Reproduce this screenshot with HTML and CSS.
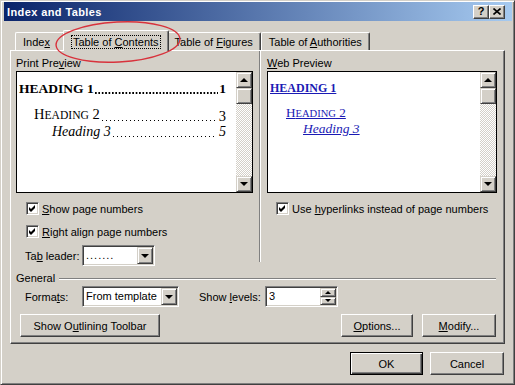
FILE: index.html
```html
<!DOCTYPE html>
<html lang="en">
<head>
    <meta charset="UTF-8">
    <title>Index and Tables</title>
    <link rel="stylesheet" href="styles.css">
</head>
<body>
    <div class="window">
        <div class="titlebar">
            <span class="title">Index and Tables</span>
            <div class="title-buttons">
                <span class="tbtn">?</span>
                <span class="tbtn">
                    <svg width="8" height="7" viewBox="0 0 8 7"><path d="M0.5 0.5 L7.5 6.5 M7.5 0.5 L0.5 6.5" stroke="#000" stroke-width="1.6"/></svg>
                </span>
            </div>
        </div>

        <div class="content">
            <div class="tabs">
                <div class="tab tab-index">Inde<u>x</u></div>
                <div class="tab active"><span class="focus">Table of <u>C</u>ontents</span></div>
                <div class="tab">Table of <u>F</u>igures</div>
                <div class="tab">Table of <u>A</u>uthorities</div>
            </div>

            <div class="panel">
                <div class="columns">
                    <div class="col col-print">
                        <div class="group-label">Print Pre<u>v</u>iew</div>
                        <div class="preview">
                            <div class="preview-body print">
                                <div class="toc h1"><span>HEADING 1</span><span class="leader"></span><span class="num">1</span></div>
                                <div class="toc h2"><span>H<span class="sc">EADING</span> 2</span><span class="leader"></span><span class="num">3</span></div>
                                <div class="toc h3"><span>Heading 3</span><span class="leader"></span><span class="num">5</span></div>
                            </div>
                            <div class="scrollbar">
                                <div class="sb-btn"><span class="arrow-up"></span></div>
                                <div class="sb-btn"></div>
                                <div class="sb-track"></div>
                                <div class="sb-btn"><span class="arrow-down"></span></div>
                            </div>
                        </div>
                        <div class="check-row first">
                            <span class="checkbox"><svg width="7" height="7" viewBox="0 0 7 7"><polygon points="0,2 2,4 6,0 6,3 2,7 0,5" fill="#000"/></svg></span>
                            <span><u>S</u>how page numbers</span>
                        </div>
                        <div class="check-row">
                            <span class="checkbox"><svg width="7" height="7" viewBox="0 0 7 7"><polygon points="0,2 2,4 6,0 6,3 2,7 0,5" fill="#000"/></svg></span>
                            <span><u>R</u>ight align page numbers</span>
                        </div>
                        <div class="field-row leader-row">
                            <span class="field-label">Ta<u>b</u> leader:</span>
                            <div class="select select-leader">
                                <span class="select-text dots">.......</span>
                                <span class="drop-btn"><span class="arrow-down"></span></span>
                            </div>
                        </div>
                    </div>

                    <div class="col col-web">
                        <div class="group-label"><u>W</u>eb Preview</div>
                        <div class="preview preview-web">
                            <div class="preview-body web">
                                <div class="link h1">HEADING 1</div>
                                <div class="link h2">H<span class="sc">EADING</span> 2</div>
                                <div class="link h3">Heading 3</div>
                            </div>
                            <div class="scrollbar">
                                <div class="sb-btn"><span class="arrow-up"></span></div>
                                <div class="sb-btn"></div>
                                <div class="sb-track"></div>
                                <div class="sb-btn"><span class="arrow-down"></span></div>
                            </div>
                        </div>
                        <div class="check-row first">
                            <span class="checkbox"><svg width="7" height="7" viewBox="0 0 7 7"><polygon points="0,2 2,4 6,0 6,3 2,7 0,5" fill="#000"/></svg></span>
                            <span>Use <u>h</u>yperlinks instead of page numbers</span>
                        </div>
                    </div>
                </div>

                <div class="general">
                    <span>General</span>
                    <span class="etched"></span>
                </div>

                <div class="field-row formats-row">
                    <span class="field-label">Forma<u>t</u>s:</span>
                    <div class="select select-formats">
                        <span class="select-text">From template</span>
                        <span class="drop-btn"><span class="arrow-down"></span></span>
                    </div>
                    <span class="field-label levels-label">Show <u>l</u>evels:</span>
                    <div class="select spin">
                        <span class="select-text">3</span>
                        <span class="spin-btns">
                            <span class="spin-btn"><span class="arrow-up small"></span></span>
                            <span class="spin-btn"><span class="arrow-down small"></span></span>
                        </span>
                    </div>
                </div>

                <div class="button-row">
                    <button class="btn btn-outline">Show O<u>u</u>tlining Toolbar</button>
                    <span class="spacer"></span>
                    <button class="btn btn-options"><u>O</u>ptions...</button>
                    <button class="btn btn-modify"><u>M</u>odify...</button>
                </div>
            </div>

            <div class="footer">
                <button class="btn btn-default">OK</button>
                <button class="btn btn-cancel">Cancel</button>
            </div>
        </div>

        <svg class="highlight" width="128" height="44" viewBox="0 0 128 44">
            <ellipse cx="64" cy="22" rx="62" ry="20" fill="none" stroke="#d8323c" stroke-width="1.4" transform="rotate(-3 64 22)"/>
        </svg>
    </div>
</body>
</html>
```

FILE: styles.css
```css
* {
    box-sizing: border-box;
}

body {
    margin: 0;
    font-family: "Liberation Sans", Arial, sans-serif;
    font-size: 11px;
    color: #000;
    background: #d4d0c8;
}

.window {
    position: relative;
    width: 515px;
    height: 385px;
    background: #d4d0c8;
    border: 1px solid;
    border-color: #d4d0c8 #404040 #404040 #d4d0c8;
    box-shadow: inset 1px 1px #fff, inset -1px -1px #808080;
    padding: 1px 2px 2px 3px;
}

/* title bar */

.titlebar {
    height: 19px;
    display: flex;
    align-items: center;
    justify-content: space-between;
    background: linear-gradient(to right, #0a246a, #a6caf0);
    padding: 0 7px 0 3px;
}

.title {
    color: #fff;
    font-weight: bold;
    letter-spacing: 0.4px;
}

.title-buttons {
    display: flex;
}

.tbtn {
    width: 16px;
    height: 14px;
    display: flex;
    align-items: center;
    justify-content: center;
    background: #d4d0c8;
    border: 1px solid;
    border-color: #fff #404040 #404040 #fff;
    box-shadow: inset -1px -1px #808080;
    font-weight: bold;
    font-size: 11px;
    line-height: 1;
}

/* tabs */

.content {
    padding: 0 7px 0 6px;
}

.tabs {
    display: flex;
    align-items: flex-end;
    margin-top: 9px;
    padding-left: 5px;
    height: 20px;
}

.tab {
    position: relative;
    border: 1px solid;
    border-bottom: none;
    border-color: #fff #404040 #404040 #fff;
    border-radius: 2px 2px 0 0;
    box-shadow: inset -1px 0 #808080;
    padding: 3px 7px 1px;
    line-height: 13px;
    white-space: nowrap;
    background: #d4d0c8;
}

.tab-index {
    padding-right: 14px;
}

.tab.active {
    z-index: 2;
    margin: 0 -2px -1px;
    padding: 4px 7px 2px;
}

.focus {
    display: block;
    border: 1px dotted #000;
    padding: 0 1px;
    line-height: 12px;
}

/* panel */

.panel {
    border: 1px solid;
    border-color: #fff #404040 #404040 #fff;
    box-shadow: inset -1px -1px #808080;
    padding-bottom: 6px;
}

.columns {
    display: grid;
    grid-template-columns: 248px 1fr;
    align-items: start;
}

.col {
    padding-top: 6px;
}

.col-print {
    padding-left: 5px;
}

.col-web {
    height: 211px;
    border-left: 1px solid #808080;
    box-shadow: inset 1px 0 #fff;
    padding-left: 7px;
}

.group-label {
    line-height: 13px;
}

.preview {
    margin-top: 1px;
    width: 237px;
    height: 122px;
    border: 1px solid #000;
    background: #fff;
    display: flex;
}

.preview-web {
    width: 230px;
}

.preview-body {
    flex: 1;
    min-width: 0;
    font-family: "Liberation Serif", "Times New Roman", serif;
    padding-top: 9px;
}

.print {
    padding-right: 10px;
}

.sc {
    font-size: 80%;
}

.toc {
    display: flex;
    align-items: flex-end;
    white-space: nowrap;
}

.leader {
    flex: 1 1 0;
    min-width: 0;
    height: 1px;
    margin: 0 2px 3px 2px;
    background: linear-gradient(to right, #000 1px, transparent 1px) 0 0 / 4px 1px repeat-x;
}

.num {
    margin-left: 2px;
}

.toc.h1 {
    font-weight: bold;
    font-size: 13.5px;
    line-height: 16px;
    padding-left: 2px;
}

.toc.h1 .leader {
    height: 2px;
    margin: 0 1px 3px 1px;
    background: linear-gradient(to right, #000 2px, transparent 2px) 0 0 / 3.4px 2px repeat-x;
}

.toc.h1 .num {
    margin-left: 0;
}

.toc.h2 {
    font-size: 14.5px;
    line-height: 16px;
    margin-top: 9px;
    padding-left: 17px;
}

.toc.h3 {
    font-style: italic;
    font-size: 14px;
    line-height: 16px;
    padding-left: 35px;
}

.link {
    color: #1a1ab4;
    text-decoration: underline;
    white-space: nowrap;
}

.link.h1 {
    font-weight: bold;
    font-size: 12px;
    line-height: 14px;
    padding-left: 2px;
}

.link.h2 {
    font-size: 13.2px;
    line-height: 15px;
    margin-top: 10px;
    padding-left: 18px;
}

.link.h3 {
    font-style: italic;
    font-size: 13.5px;
    line-height: 15px;
    padding-left: 35px;
}

/* scrollbar */

.scrollbar {
    width: 16px;
    display: flex;
    flex-direction: column;
    background: repeating-conic-gradient(#d4d0c8 0 25%, #fff 0 50%) 0 0 / 2px 2px;
}

.sb-btn {
    height: 16px;
    display: flex;
    align-items: center;
    justify-content: center;
    background: #d4d0c8;
    border: 1px solid;
    border-color: #d4d0c8 #404040 #404040 #d4d0c8;
    box-shadow: inset 1px 1px #fff, inset -1px -1px #808080;
}

.sb-track {
    flex: 1;
}

.arrow-up,
.arrow-down {
    width: 0;
    height: 0;
    border-left: 4px solid transparent;
    border-right: 4px solid transparent;
}

.arrow-up {
    border-bottom: 4px solid #000;
}

.arrow-down {
    border-top: 4px solid #000;
}

.arrow-up.small {
    border-left-width: 3px;
    border-right-width: 3px;
    border-bottom-width: 3px;
}

.arrow-down.small {
    border-left-width: 3px;
    border-right-width: 3px;
    border-top-width: 3px;
}

/* checkboxes */

.check-row {
    display: flex;
    align-items: center;
    gap: 3px;
    height: 13px;
    margin-top: 10px;
    padding-left: 10px;
    white-space: nowrap;
}

.check-row.first {
    margin-top: 9px;
}

.col-web .check-row {
    padding-left: 9px;
}

.checkbox {
    width: 13px;
    height: 13px;
    flex: none;
    display: flex;
    align-items: center;
    justify-content: center;
    background: #fff;
    border: 1px solid;
    border-color: #808080 #fff #fff #808080;
    box-shadow: inset 1px 1px #404040, inset -1px -1px #d4d0c8;
}

/* fields */

.field-row {
    display: flex;
    align-items: center;
}

.leader-row {
    margin-top: 7px;
    padding-left: 9px;
}

.field-label {
    width: 57px;
    white-space: nowrap;
}

.select {
    height: 21px;
    display: flex;
    background: #fff;
    border: 1px solid;
    border-color: #808080 #fff #fff #808080;
    box-shadow: inset 1px 1px #404040, inset -1px -1px #d4d0c8;
    padding: 1px;
}

.select-text {
    flex: 1;
    padding-left: 2px;
    line-height: 17px;
    white-space: nowrap;
}

.dots {
    letter-spacing: 1px;
}

.drop-btn {
    width: 16px;
    display: flex;
    align-items: center;
    justify-content: center;
    background: #d4d0c8;
    border: 1px solid;
    border-color: #d4d0c8 #404040 #404040 #d4d0c8;
    box-shadow: inset 1px 1px #fff, inset -1px -1px #808080;
}

.select-leader {
    width: 73px;
}

.select-formats {
    width: 97px;
}

.general {
    display: flex;
    align-items: center;
    gap: 4px;
    margin-top: 6px;
    padding: 0 8px 0 5px;
    line-height: 13px;
}

.etched {
    flex: 1;
    border-top: 1px solid #808080;
    border-bottom: 1px solid #fff;
}

.formats-row {
    margin-top: 1px;
    padding-left: 14px;
}

.levels-label {
    margin-left: 20px;
    width: 66px;
}

.spin {
    width: 73px;
}

.spin-btns {
    width: 16px;
    display: flex;
    flex-direction: column;
}

.spin-btn {
    flex: 1;
    display: flex;
    align-items: center;
    justify-content: center;
    background: #d4d0c8;
    border: 1px solid;
    border-color: #d4d0c8 #404040 #404040 #d4d0c8;
    box-shadow: inset 1px 1px #fff, inset -1px -1px #808080;
}

/* buttons */

.button-row {
    display: flex;
    margin-top: 7px;
    padding: 0 8px 0 9px;
    gap: 9px;
}

.spacer {
    flex: 1;
}

.btn {
    height: 23px;
    padding: 0;
    font-family: inherit;
    font-size: 11px;
    color: #000;
    background: #d4d0c8;
    border: 1px solid;
    border-color: #fff #404040 #404040 #fff;
    box-shadow: inset -1px -1px #808080;
    white-space: nowrap;
}

.btn-outline {
    width: 140px;
}

.btn-options {
    width: 72px;
}

.btn-modify {
    width: 74px;
}

.footer {
    display: flex;
    justify-content: flex-end;
    gap: 7px;
    margin-top: 8px;
    padding-right: 1px;
}

.btn-default {
    width: 73px;
    border-color: #000;
    box-shadow: inset 1px 1px #fff, inset -1px -1px #404040, inset -2px -2px #808080;
}

.btn-cancel {
    width: 74px;
}

/* red marker drawn over the dialog */

.highlight {
    position: absolute;
    left: 53px;
    top: 19px;
    z-index: 5;
}
```
